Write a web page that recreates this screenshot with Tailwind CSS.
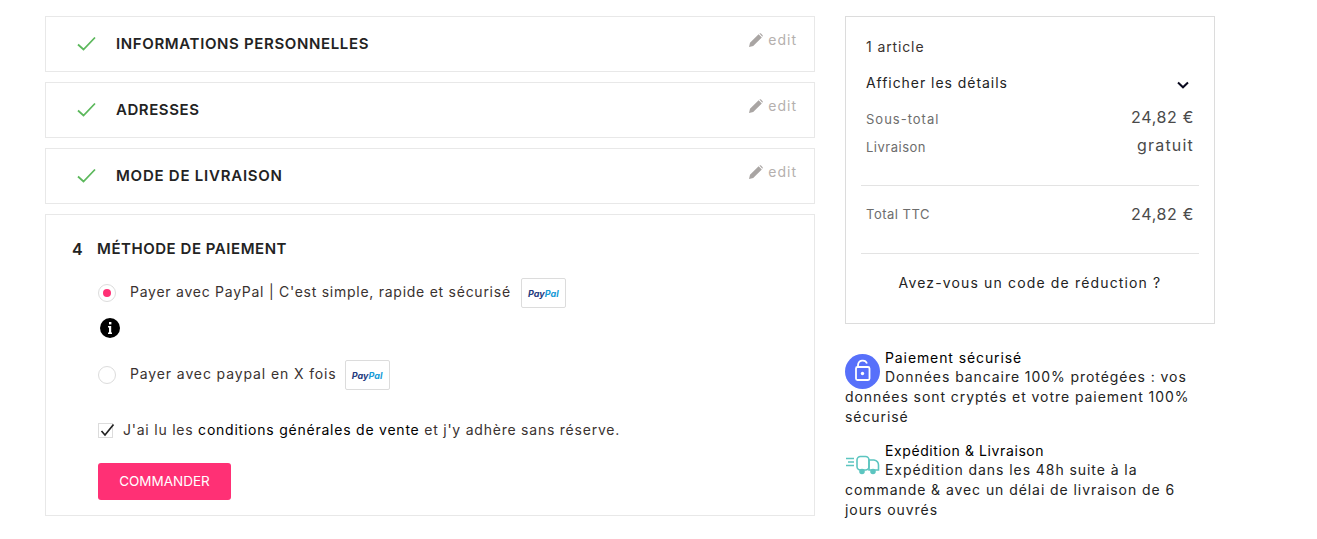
<!DOCTYPE html>
<html lang="fr"><head><meta charset="utf-8"><script src="https://cdn.jsdelivr.net/npm/@tailwindcss/browser@4"></script></head>
<body class="bg-white">
<div class="flex gap-[30px] pl-[45px] pt-[16px] font-['Inter',sans-serif] text-[#232323] h-[539px] overflow-hidden">
  <div class="w-[770px] flex flex-col gap-[10px]">
    <div class="h-[56px] border border-[#e8e8e8] flex items-start">
      <svg class="w-[22px] h-[16px] ml-[30px] mt-[19px]" viewBox="0 0 22 16" fill="none"><path d="M2 8.5 L7.5 13.5 L19 1.5" stroke="#5cb85c" stroke-width="1.8"/></svg>
      <span class="ml-[18px] mt-[17px] text-[15px] leading-[20px] font-semibold tracking-[0.64px]">INFORMATIONS PERSONNELLES</span>
      <span class="ml-auto mr-[17px] mt-[14px] flex items-center gap-[5px] text-[14px] leading-[18px] text-[#b5b0ae] tracking-[1px]"><svg class="w-[14px] h-[14px]" viewBox="0 0 14 14" fill="#a9a5a3"><path d="M0 14 L1 9.8 L9.6 1.2 L12.8 4.4 L4.2 13 Z M10.4 0.6 Q11.2 -0.2 12 0.6 L13.4 2 Q14.2 2.8 13.4 3.6 L13.4 3.8 Z"/></svg>edit</span>
    </div>
    <div class="h-[56px] border border-[#e8e8e8] flex items-start">
      <svg class="w-[22px] h-[16px] ml-[30px] mt-[19px]" viewBox="0 0 22 16" fill="none"><path d="M2 8.5 L7.5 13.5 L19 1.5" stroke="#5cb85c" stroke-width="1.8"/></svg>
      <span class="ml-[18px] mt-[17px] text-[15px] leading-[20px] font-semibold tracking-[0.56px]">ADRESSES</span>
      <span class="ml-auto mr-[17px] mt-[14px] flex items-center gap-[5px] text-[14px] leading-[18px] text-[#b5b0ae] tracking-[1px]"><svg class="w-[14px] h-[14px]" viewBox="0 0 14 14" fill="#a9a5a3"><path d="M0 14 L1 9.8 L9.6 1.2 L12.8 4.4 L4.2 13 Z M10.4 0.6 Q11.2 -0.2 12 0.6 L13.4 2 Q14.2 2.8 13.4 3.6 L13.4 3.8 Z"/></svg>edit</span>
    </div>
    <div class="h-[56px] border border-[#e8e8e8] flex items-start">
      <svg class="w-[22px] h-[16px] ml-[30px] mt-[19px]" viewBox="0 0 22 16" fill="none"><path d="M2 8.5 L7.5 13.5 L19 1.5" stroke="#5cb85c" stroke-width="1.8"/></svg>
      <span class="ml-[18px] mt-[17px] text-[15px] leading-[20px] font-semibold tracking-[0.76px]">MODE DE LIVRAISON</span>
      <span class="ml-auto mr-[17px] mt-[14px] flex items-center gap-[5px] text-[14px] leading-[18px] text-[#b5b0ae] tracking-[1px]"><svg class="w-[14px] h-[14px]" viewBox="0 0 14 14" fill="#a9a5a3"><path d="M0 14 L1 9.8 L9.6 1.2 L12.8 4.4 L4.2 13 Z M10.4 0.6 Q11.2 -0.2 12 0.6 L13.4 2 Q14.2 2.8 13.4 3.6 L13.4 3.8 Z"/></svg>edit</span>
    </div>
    <div class="h-[302px] border border-[#e8e8e8] pl-[26px] pt-[24px]">
      <div class="flex text-[15px] leading-[20px] font-semibold tracking-[0.54px]"><span class="w-[25px] text-[16px]">4</span><span>MÉTHODE DE PAIEMENT</span></div>
      <div class="ml-[26px] mt-[19px] flex items-start h-[30px]">
        <span class="w-[18px] h-[18px] mt-[6px] rounded-full border border-[#dcdcdc] flex items-center justify-center"><span class="w-[8px] h-[8px] rounded-full bg-[#ff3075]"></span></span>
        <span class="ml-[14px] mt-[5px] text-[14px] leading-[18px] tracking-[0.74px] text-[#3a3230]">Payer avec PayPal | C'est simple, rapide et sécurisé</span>
        <span class="ml-[10px] w-[45px] h-[30px] border border-[#dcdcdc] rounded-[2px] flex items-center justify-center text-[9px] font-bold italic leading-none"><span class="text-[#253b80]">Pay</span><span class="text-[#179bd7]">Pal</span></span>
      </div>
      <div class="ml-[28px] mt-[10px] w-[20px] h-[20px] rounded-full bg-black flex items-center justify-center"><svg class="w-[4px] h-[12px]" viewBox="0 0 4 12" fill="#fff"><rect x="1" y="0" width="2.4" height="2.4"/><path d="M0 4 H3.2 V10.4 H4 V12 H0 V10.4 H1 V5.5 H0 Z"/></svg></div>
      <div class="ml-[26px] mt-[22px] flex items-start h-[30px]">
        <span class="w-[18px] h-[18px] mt-[6px] rounded-full border border-[#dcdcdc]"></span>
        <span class="ml-[14px] mt-[5px] text-[14px] leading-[18px] tracking-[0.88px] text-[#3a3230]">Payer avec paypal en X fois</span>
        <span class="ml-[8px] w-[45px] h-[30px] border border-[#dcdcdc] rounded-[2px] flex items-center justify-center text-[9px] font-bold italic leading-none"><span class="text-[#253b80]">Pay</span><span class="text-[#179bd7]">Pal</span></span>
      </div>
      <div class="ml-[26px] mt-[30px] flex items-start">
        <span class="w-[15px] h-[15px] mt-[3px] border border-[#dcdcdc] relative"><svg class="absolute left-[1px] -top-[2px] w-[15px] h-[15px]" viewBox="0 0 15 15" fill="none"><path d="M1.5 9 L5 13 L13.5 2.5" stroke="#232323" stroke-width="1.7"/></svg></span>
        <span class="ml-[10px] text-[14px] leading-[20px] tracking-[0.77px] text-[#3a3230]">J'ai lu les <span class="text-black">conditions générales de vente</span> et j'y adhère sans réserve.</span>
      </div>
      <div class="ml-[26px] mt-[23px] w-[133px] h-[37px] rounded-[3px] bg-[#ff3075] text-white text-[13.5px] flex items-center justify-center">COMMANDER</div>
    </div>
  </div>
  <div class="w-[370px]">
    <div class="h-[308px] border border-[#dcdcdc] px-[15px]">
      <div class="px-[5px] pt-[21px] text-[14px] leading-[18px] tracking-[0.88px] text-[#3a3230]">1 article</div>
      <div class="px-[5px] mt-[18px] flex items-center justify-between text-[14px] leading-[18px] tracking-[0.95px] text-[#232323]"><span>Afficher les détails</span><svg class="w-[12px] h-[8px] mr-[5px] mt-[4px]" viewBox="0 0 12 8" fill="none"><path d="M1 1.5 L6 6.3 L11 1.5" stroke="#0a0a1f" stroke-width="2"/></svg></div>
      <div class="px-[5px] mt-[13px] flex justify-between h-[28px] text-[#6d6d6d]"><span class="text-[13px] leading-[28px] tracking-[1px]">Sous-total</span><span class="text-[16px] leading-[24px] tracking-[0.65px] text-[#4a4a4a]">24,82 €</span></div>
      <div class="px-[5px] flex justify-between h-[28px] text-[#6d6d6d]"><span class="text-[13px] leading-[28px] tracking-[0.5px]">Livraison</span><span class="text-[16px] leading-[24px] tracking-[1.2px] text-[#4a4a4a]">gratuit</span></div>
      <div class="border-t border-[#e3e3e3] mt-[24px] px-[5px] flex justify-between items-center h-[68px] pb-[10px] text-[#6d6d6d]"><span class="text-[13px] tracking-[0.5px]">Total TTC</span><span class="text-[16px] leading-[24px] -mt-[2px] tracking-[0.65px] text-[#4a4a4a]">24,82 €</span></div>
      <div class="border-t border-[#e3e3e3] pt-[20px] text-center text-[14px] leading-[18px] tracking-[1.15px] text-[#232323]">Avez-vous un code de réduction ?</div>
    </div>
    <div class="mt-[24px] text-[14px] leading-[20px] tracking-[0.93px] text-[#232323]">
      <svg class="float-left mr-[5px] mt-[6px] -mb-[6px] w-[35px] h-[35px]" viewBox="0 0 35 35"><circle cx="17.5" cy="17.5" r="17.5" fill="#5770fa"/><g fill="none" stroke="#fff" stroke-width="1.8"><rect x="11" y="13" width="13.5" height="13" rx="1.5"/><path d="M13 13 V11 A4.7 4.7 0 0 1 22 9.5"/></g><circle cx="17.5" cy="19.5" r="1.7" fill="#fff"/></svg>
      <div class="text-black leading-[19px] tracking-[0.9px]">Paiement sécurisé</div>
      <div>Données bancaire 100% protégées : vos données sont cryptés et votre paiement 100% sécurisé</div>
    </div>
    <div class="mt-[14px] text-[14px] leading-[20px] tracking-[0.93px] text-[#232323]">
      <svg class="float-left mr-[5px] mt-[8px] -mb-[8px] w-[35px] h-[35px]" viewBox="0 0 35 35" fill="none" stroke="#5cc5c0" stroke-width="1.6"><path d="M1 9.5 H9 M3 13 H9 M1 16.5 H9"/><rect x="12" y="7.5" width="12" height="13.5" rx="3.5"/><path d="M24 11 H29 Q33.5 12 33.5 16 V21 H24 Z"/><circle cx="17" cy="22.5" r="2" fill="#5cc5c0"/><circle cx="28" cy="22.5" r="2" fill="#5cc5c0"/></svg>
      <div class="text-black leading-[19px] tracking-[0.6px]">Expédition &amp; Livraison</div>
      <div>Expédition dans les 48h suite à la commande &amp; avec un délai de livraison de 6 jours ouvrés</div>
    </div>
  </div>
</div>
</body></html>
